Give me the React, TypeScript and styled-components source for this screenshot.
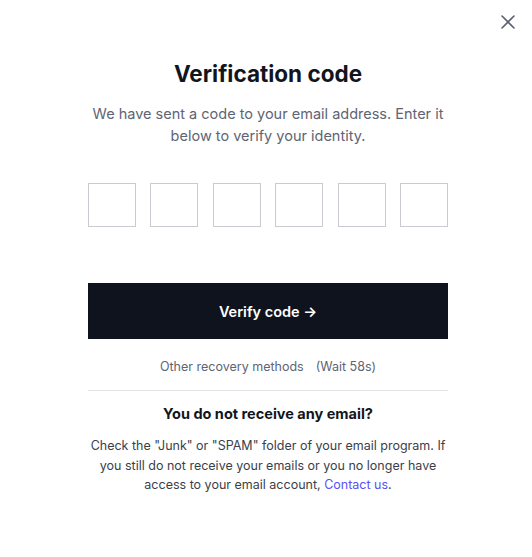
import styled, { createGlobalStyle } from 'styled-components';

const GlobalStyle = createGlobalStyle`
  html, body {
    margin: 0;
    padding: 0;
    background: #ffffff;
  }
  body {
    font-family: Inter, "Noto Sans", "DejaVu Sans", sans-serif;
    color: #111827;
  }
`;

const Modal = styled.div`
  position: relative;
  width: 532px;
  height: 557px;
  box-sizing: border-box;
  padding: 58px 84px 0 88px;
  background: #ffffff;
`;

const CloseButton = styled.button`
  position: absolute;
  top: 12px;
  right: 14px;
  width: 20px;
  height: 20px;
  padding: 0;
  border: 0;
  background: transparent;
  display: flex;
  align-items: center;
  justify-content: center;
  cursor: pointer;
`;

const Column = styled.div`
  width: 360px;
  display: flex;
  flex-direction: column;
  align-items: stretch;
  text-align: center;
`;

const Title = styled.h1`
  margin: 0;
  font-size: 22.5px;
  line-height: 32px;
  font-weight: 700;
  color: #111520;
`;

const Subtitle = styled.p`
  margin: 13px 0 0;
  font-size: 14.5px;
  line-height: 22px;
  color: #5e6473;
`;

const CodeRow = styled.div`
  margin-top: 36px;
  display: flex;
  justify-content: space-between;
`;

const CodeBox = styled.input`
  width: 48px;
  height: 44px;
  box-sizing: border-box;
  border: 1px solid #c9cbd1;
  border-radius: 0;
  padding: 0;
  text-align: center;
  font: inherit;
  font-size: 18px;
  outline: none;
`;

const VerifyButton = styled.button`
  margin-top: 56px;
  height: 56px;
  width: 100%;
  border: 0;
  background: #0f131d;
  color: #ffffff;
  font-family: inherit;
  font-size: 14.5px;
  font-weight: 600;
  cursor: pointer;
`;

const RecoveryRow = styled.div`
  margin-top: 19px;
  font-size: 12.5px;
  line-height: 18px;
  color: #5e6473;
  display: flex;
  justify-content: center;
  gap: 12px;
`;

const Divider = styled.hr`
  margin: 14px 0 0;
  border: 0;
  border-top: 1px solid #e3e4e7;
`;

const HelpTitle = styled.h2`
  margin: 12px 0 0;
  font-size: 14.5px;
  line-height: 22px;
  font-weight: 700;
  color: #111520;
`;

const HelpText = styled.p`
  margin: 11px -4px 0;
  font-size: 12.5px;
  line-height: 19.7px;
  color: #3a3f4b;
`;

const Link = styled.a`
  color: #5b4ff6;
  text-decoration: none;
`;

export default function App() {
  return (
    <>
      <GlobalStyle />
      <Modal>
        <CloseButton aria-label="Close">
          <svg width="14" height="14" viewBox="0 0 14 14" fill="none">
            <path d="M1 1L13 13M13 1L1 13" stroke="#5a6070" strokeWidth="1.6" strokeLinecap="round" />
          </svg>
        </CloseButton>
        <Column>
          <Title>Verification code</Title>
          <Subtitle>
            We have sent a code to your email address. Enter it below to verify your identity.
          </Subtitle>
          <CodeRow>
            {Array.from({ length: 6 }).map((_, i) => (
              <CodeBox key={i} maxLength={1} inputMode="numeric" />
            ))}
          </CodeRow>
          <VerifyButton>Verify code →</VerifyButton>
          <RecoveryRow>
            <span>Other recovery methods</span>
            <span>(Wait 58s)</span>
          </RecoveryRow>
          <Divider />
          <HelpTitle>You do not receive any email?</HelpTitle>
          <HelpText>
            Check the "Junk" or "SPAM" folder of your email program. If you still do not receive
            your emails or you no longer have access to your email account,{' '}
            <Link href="#">Contact us</Link>.
          </HelpText>
        </Column>
      </Modal>
    </>
  );
}
